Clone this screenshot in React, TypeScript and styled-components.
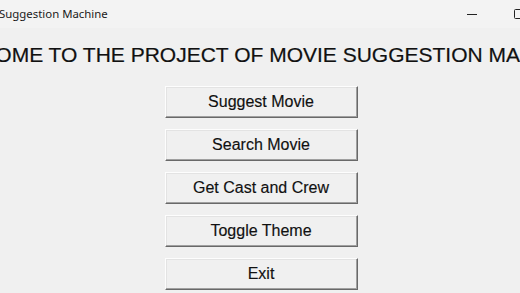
import React from 'react';
import styled, { createGlobalStyle } from 'styled-components';

const GlobalStyle = createGlobalStyle`
  html, body {
    margin: 0;
    padding: 0;
    background: #f0f0f0;
    overflow: hidden;
  }
`;

const Window = styled.div`
  width: 520px;
  height: 293px;
  background: #f0f0f0;
  display: flex;
  flex-direction: column;
  overflow: hidden;
`;

const TitleBar = styled.div`
  height: 28px;
  flex: 0 0 28px;
  background: #f3f3f3;
  display: flex;
  align-items: center;
  justify-content: space-between;
  font-family: 'Noto Sans', 'Open Sans', sans-serif;
  font-size: 11.4px;
  color: #1a1a1a;
  padding-bottom: 1px;
  box-sizing: border-box;
`;

const TitleText = styled.span`
  margin-left: -1px;
  white-space: nowrap;
`;

const Controls = styled.div`
  display: flex;
  align-items: center;
  gap: 37px;
  margin-right: -4px;
`;

const Heading = styled.div`
  margin-top: 15px;
  height: 24px;
  line-height: 24px;
  display: flex;
  justify-content: center;
  font-family: 'Liberation Sans', Arial, sans-serif;
  font-size: 21px;
  color: #111;
  white-space: nowrap;
  -webkit-text-stroke: 0.2px #111;
`;

const ButtonList = styled.div`
  margin-top: 19px;
  display: flex;
  flex-direction: column;
  align-items: center;
  gap: 11px;
  padding-left: 2px;
`;

const Button = styled.button`
  width: 193px;
  height: 32px;
  box-sizing: border-box;
  background: #f0f0f0;
  border: 1px solid;
  border-color: #fdfdfd #696969 #696969 #fdfdfd;
  box-shadow: inset -1px -1px 0 #a0a0a0, inset 1px 1px 0 #e3e3e3;
  font-family: 'Liberation Sans', Arial, sans-serif;
  font-size: 16px;
  color: #111;
  -webkit-text-stroke: 0.15px #111;
  padding: 0 0 1px;
  cursor: pointer;
`;

const items = ['Suggest Movie', 'Search Movie', 'Get Cast and Crew', 'Toggle Theme', 'Exit'];

export default function App() {
  return (
    <Window>
      <GlobalStyle />
      <TitleBar>
        <TitleText>Suggestion Machine</TitleText>
        <Controls>
          <svg width="10" height="10" viewBox="0 0 10 10">
            <line x1="0" y1="5.5" x2="10" y2="5.5" stroke="#222" strokeWidth="1" />
          </svg>
          <svg width="10" height="10" viewBox="0 0 10 10">
            <rect x="0.5" y="0.5" width="9" height="9" rx="1" fill="none" stroke="#222" strokeWidth="1" />
          </svg>
        </Controls>
      </TitleBar>
      <Heading>WELCOME TO THE PROJECT OF MOVIE SUGGESTION MACHINE</Heading>
      <ButtonList>
        {items.map((label) => (
          <Button key={label}>{label}</Button>
        ))}
      </ButtonList>
    </Window>
  );
}
